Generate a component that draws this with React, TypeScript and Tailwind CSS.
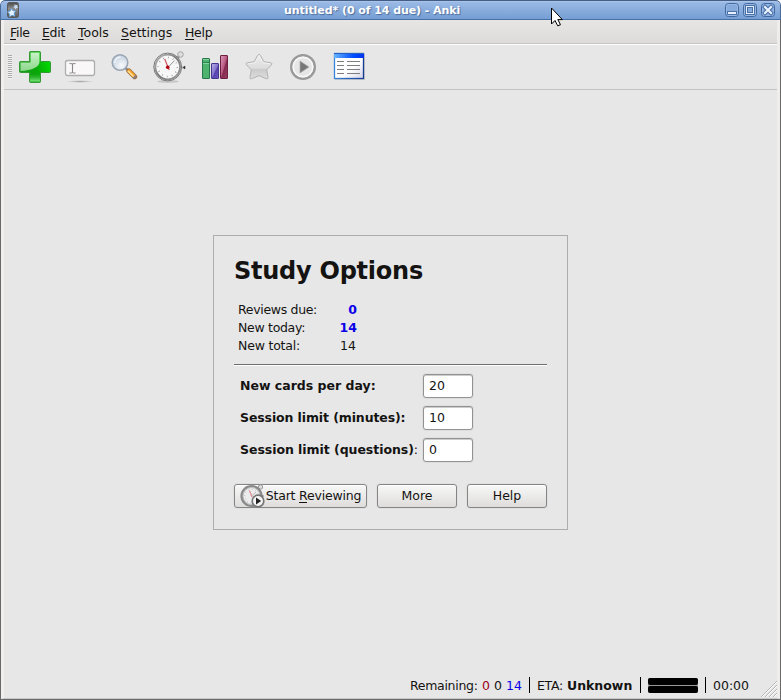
import React from "react";

function AppIcon() {
  return (
    <svg width="14" height="18" viewBox="0 0 14 18" className="block">
      <defs>
        <linearGradient id="app" x1="0" y1="0" x2="0" y2="1">
          <stop offset="0" stopColor="#4a4a4a" />
          <stop offset="0.4" stopColor="#8c8c8c" />
          <stop offset="1" stopColor="#555" />
        </linearGradient>
      </defs>
      <rect x="1.500" y="1.500" width="11" height="15" rx="2" fill="url(#app)" stroke="#5a5a5a" />
      <path d="M8.700 3l1 1.300 1.800-.6-.2 1.800 1 1.200-1.800.3-1 1.400-.8-1.600-1.600-.6 1.300-1z" fill="#c8ddf5" />
      <path d="M5.500 7.500l1.400 2.200 2.700.2-1.500 2.300.8 3-2.900-.9-2.600 1.500.1-3-2-1.900 2.700-.8z" fill="#e2f1ff" stroke="#5aa0e0" strokeWidth=".8" />
    </svg>
  );
}

function WindowButton({ kind }: { kind: "min" | "max" | "close" }) {
  return (
    <svg width="15" height="15" viewBox="0 0 15 15" className="block">
      <rect x=".5" y=".5" width="13" height="13" rx="3" fill="#86aadb" stroke="#41699f" />
      <rect x="1.500" y="1.500" width="11" height="11" rx="2" fill="none" stroke="#9dbbe5" strokeWidth=".8" />
      {kind === "min" && <rect x="2.500" y="8.500" width="9" height="3" fill="#e8f1fd" stroke="#4a71a8" />}
      {kind === "max" && (
        <g>
          <rect x="2.500" y="2.500" width="9" height="9" fill="#e4eefc" stroke="#4a71a8" />
          <rect x="4.500" y="4.500" width="5" height="5" fill="#86aadb" stroke="#4a71a8" />
        </g>
      )}
      {kind === "close" && (
        <g>
          <path d="M4 4l6 6M10 4l-6 6" stroke="#4a71a8" strokeWidth="4.200" strokeLinecap="square" />
          <path d="M4 4l6 6M10 4l-6 6" stroke="#e8f1fd" strokeWidth="2.200" strokeLinecap="square" />
        </g>
      )}
    </svg>
  );
}

function Pointer() {
  return (
    <svg width="16" height="24" viewBox="0 0 16 24" className="absolute left-[550px] top-[7px] z-10">
      <path d="M2.500 2v15l3-3 2.800 5.500 3-1.300-2.700-5.200h4.300z" fill="#333" opacity=".3" />
      <path d="M1.500 1v16l3.500-3.500 2.700 5.300 2.700-1.200-2.600-5h4.500z" fill="#fff" stroke="#000" strokeWidth="1" />
    </svg>
  );
}

function MenuItem({ first, rest, className }: { first: string; rest: string; className: string }) {
  return (
    <button className={"h-4 text-left whitespace-nowrap leading-4 " + className}>
      <span className="underline decoration-1 underline-offset-2">{first}</span>
      {rest}
    </button>
  );
}

function PlusIcon() {
  return (
    <svg width="34" height="34" viewBox="0 0 34 34">
      <defs>
        <linearGradient id="plus" x1="0" y1="0.800" x2="1" y2=".4">
          <stop offset="0" stopColor="#1b981b" />
          <stop offset=".55" stopColor="#08a808" />
          <stop offset="1" stopColor="#00dc00" />
        </linearGradient>
        <linearGradient id="plusBottom" x1="0" y1="0" x2="0" y2="1">
          <stop offset="0" stopColor="#079b07" stopOpacity="0" />
          <stop offset="1" stopColor="#80e580" />
        </linearGradient>
        <linearGradient id="plusGloss" x1="0" y1="0" x2="0" y2="1">
          <stop offset="0" stopColor="#c8f3c8" />
          <stop offset="1" stopColor="#8bd68b" />
        </linearGradient>
      </defs>
      <path d="M12.500 1.500h9q1 0 1 1v9h9q1 0 1 1v9q0 1-1 1h-9v9q0 1-1 1h-9q-1 0-1-1v-9h-9q-1 0-1-1v-9q0-1 1-1h9v-9q0-1 1-1z" fill="url(#plus)" stroke="#349b34" />
      <path d="M12 22h10v9.500H12z" fill="url(#plusBottom)" />
      <path d="M12.500 2.500h9v9q0 4-5 6.500-5 2.500-14 3v-8.500h10z" fill="url(#plusGloss)" />
    </svg>
  );
}

function FieldIcon() {
  return (
    <svg width="32" height="34" viewBox="0 0 32 34">
      <defs>
        <radialGradient id="fieldShade">
          <stop offset="0" stopColor="#777" stopOpacity=".6" />
          <stop offset="1" stopColor="#777" stopOpacity="0" />
        </radialGradient>
      </defs>
      <ellipse cx="16" cy="31.500" rx="14" ry="1.300" fill="url(#fieldShade)" />
      <rect x="1.500" y="10.500" width="29" height="15" rx="2.200" fill="#faf7f8" stroke="#adadad" strokeWidth="1.300" />
      <path d="M5.500 13.500q3 0 3 .8 0-.8 3-.8M8.500 14v9M5.500 23q3 0 3-.8 0 .8 3 .8" fill="none" stroke="#888" strokeWidth="1.100" />
    </svg>
  );
}

function SearchIcon() {
  return (
    <svg width="28" height="28" viewBox="0 0 28 28">
      <defs>
        <radialGradient id="lens" cx=".6" cy=".7" r=".75">
          <stop offset="0" stopColor="#f8fafc" />
          <stop offset=".6" stopColor="#d5dee8" />
          <stop offset="1" stopColor="#b8c8da" />
        </radialGradient>
      </defs>
      <path d="M15.500 15l3 3" stroke="#888" strokeWidth="2.500" />
      <path d="M19 18l5.700 5.700" stroke="#a0703f" strokeWidth="5" strokeLinecap="round" />
      <path d="M19 18l5.200 5.200" stroke="#f6a32c" strokeWidth="3.500" strokeLinecap="round" />
      <path d="M18.300 18.300l5 5" stroke="#ffe6a3" strokeWidth="1.300" strokeLinecap="round" />
      <path d="M23.300 25.500l2.700-2.700" stroke="#8c7b85" strokeWidth="2" />
      <circle cx="10" cy="9.500" r="7.800" fill="url(#lens)" stroke="#9aa5b3" strokeWidth="1.500" />
      <path d="M4.700 10a6 6 0 0 1 6-6" fill="none" stroke="#eef5fb" strokeWidth="1.500" />
    </svg>
  );
}

function Stopwatch() {
  return (
    <svg width="34" height="34" viewBox="0 0 34 34" className="shrink-0">
      <defs>
        <linearGradient id="rim" x1="0" y1="0" x2="1" y2="1">
          <stop offset="0" stopColor="#bbb" />
          <stop offset=".5" stopColor="#777" />
          <stop offset="1" stopColor="#999" />
        </linearGradient>
      </defs>
      <ellipse cx="16" cy="31.500" rx="11" ry="1.500" fill="#aaa" opacity=".5" />
      <circle cx="28.500" cy="4.500" r="2.800" fill="#ddd" stroke="#a5a5a5" />
      <path d="M24.500 9l2.500-2.500" stroke="#999" strokeWidth="2.500" />
      <path d="M29.500 17.500h2" stroke="#aaa" strokeWidth="2" />
      <path d="M31 17.500l2-1.500v3z" fill="#222" stroke="#333" strokeWidth=".5" />
      <circle cx="15.700" cy="17" r="13.900" fill="#ddd" stroke="#777" />
      <circle cx="15.700" cy="17" r="12.300" fill="#f7f7f7" stroke="url(#rim)" strokeWidth="1.800" />
      <circle cx="15.700" cy="17" r="9.500" fill="none" stroke="#999" strokeWidth="1.600" strokeDasharray=".8 4.174" />
      <path d="M15.700 17.500l7-7" stroke="#777" strokeWidth=".8" />
      <path d="M17.200 20l-4.500-11" stroke="#c9545d" strokeWidth="1.200" />
      <circle cx="15.700" cy="17.300" r="1.800" fill="#b3000f" />
    </svg>
  );
}

function ReviewIcon() {
  return (
    <svg width="25" height="24" viewBox="0 0 25 24" className="shrink-0">
      <circle cx="20.500" cy="3" r="2.200" fill="#ddd" stroke="#999" />
      <path d="M17.500 6.500l2-2" stroke="#888" strokeWidth="2" />
      <path d="M21 12h2.500" stroke="#888" strokeWidth="2" />
      <circle cx="11.500" cy="12" r="9.900" fill="#ececec" stroke="#8a8a8a" strokeWidth="2.400" />
      <circle cx="11.500" cy="12" r="8.500" fill="none" stroke="#bbb" />
      <circle cx="11.500" cy="12" r="6.800" fill="none" stroke="#aaa" strokeWidth="1" strokeDasharray=".7 2.860" />
      <path d="M11.500 12l4.500-4" stroke="#aaa" strokeWidth=".8" />
      <path d="M12 13L9.500 6.500" stroke="#df858b" strokeWidth="1.100" />
      <circle cx="18" cy="17" r="5.800" fill="#f5f5f5" stroke="#777" strokeWidth="1.700" />
      <path d="M16 13.500v7l5.200-3.500z" fill="#222" />
    </svg>
  );
}

function StatsIcon() {
  return (
    <svg width="28" height="26" viewBox="0 0 28 26">
      <defs>
        <linearGradient id="statBlue" x1="0" y1="0" x2="1" y2="1">
          <stop offset="0" stopColor="#bcb3e8" />
          <stop offset=".5" stopColor="#8173cd" />
          <stop offset=".55" stopColor="#5744ae" />
          <stop offset="1" stopColor="#6753bd" />
        </linearGradient>
        <linearGradient id="statRed" x1="0" y1="0" x2="1" y2="1">
          <stop offset="0" stopColor="#dda0bd" />
          <stop offset=".5" stopColor="#b85580" />
          <stop offset=".55" stopColor="#852b50" />
          <stop offset="1" stopColor="#9b3c62" />
        </linearGradient>
      </defs>
      <rect x="1.500" y="4.500" width="7" height="20" rx=".5" fill="#4eb36e" stroke="#28774b" />
      <path d="M2 5.500h6M2 9.500h6" stroke="#83d39c" />
      <path d="M2 8.500h6" stroke="#308353" />
      <rect x="10.500" y="9.500" width="7" height="15" rx=".5" fill="url(#statBlue)" stroke="#45368e" />
      <rect x="19.500" y="1.500" width="7" height="23" rx=".5" fill="url(#statRed)" stroke="#6c1f40" />
    </svg>
  );
}

function StarIcon() {
  return (
    <svg width="28" height="28" viewBox="0 0 28 28">
      <defs>
        <linearGradient id="star" x1="0" y1="0" x2="0" y2="1">
          <stop offset="0" stopColor="#ececec" />
          <stop offset=".57" stopColor="#dcdcdc" />
          <stop offset=".6" stopColor="#cacaca" />
          <stop offset="1" stopColor="#dedede" />
        </linearGradient>
      </defs>
      <path d="M14 1.500q1 0 1.500 1l3.300 6.200 7 1.100q2 .5.700 2l-4.800 5 1.300 7.500q.2 2.200-1.700 1.400L14 22.600l-7.300 3.100q-1.900.8-1.700-1.400l1.300-7.500-4.800-5q-1.300-1.500.7-2l7-1.100 3.300-6.200q.5-1 1.500-1z" fill="url(#star)" stroke="#b2b2b2" />
      <path d="M14 3l4 6.800 7.300 1M14 3l-4 6.800-7.300 1" fill="none" stroke="#f2f2f2" strokeWidth=".8" />
    </svg>
  );
}

function PlayIcon() {
  return (
    <svg width="28" height="28" viewBox="0 0 28 28">
      <circle cx="14" cy="14" r="11.800" fill="#e6e6e6" stroke="#999" strokeWidth="2.400" />
      <circle cx="14" cy="14" r="9.800" fill="none" stroke="#f8f8f8" strokeWidth="1.400" />
      <path d="M11 8v12l9-6z" fill="#777" stroke="#aaa" strokeWidth=".7" />
    </svg>
  );
}

function ListIcon() {
  return (
    <svg width="32" height="28" viewBox="0 0 32 28">
      <defs>
        <linearGradient id="listBar"><stop stopColor="#67b4ff" /><stop offset=".65" stopColor="#004cff" /><stop offset="1" stopColor="#0033ed" /></linearGradient>
        <linearGradient id="listPage" x1="0" y1="0" x2="1" y2="1"><stop stopColor="#fff" /><stop offset=".6" stopColor="#fff" /><stop offset="1" stopColor="#d1d1e7" /></linearGradient>
        <linearGradient id="listEdge"><stop stopColor="#3585dc" /><stop offset="1" stopColor="#173c92" /></linearGradient>
      </defs>
      <rect x="2" y="2" width="30" height="26" fill="#999" opacity=".35" />
      <rect x="1.500" y="1.500" width="29" height="25" fill="url(#listPage)" stroke="url(#listEdge)" strokeWidth="1.300" />
      <rect x="1" y="1" width="30" height="5" fill="url(#listBar)" />
      <path d="M1 1.500h30" stroke="#2360c4" />
      <path d="M4 9.500h7M14 9.500h13M4 13.500h7M14 13.500h13M4 17.500h7M14 17.500h13M4 21.500h7M14 21.500h13" stroke="#7d7d7d" />
    </svg>
  );
}

function NumberField({ value }: { value: string }) {
  return (
    <input
      defaultValue={value}
      className="block h-6 w-[50px] rounded-[3px] border border-[#929292] bg-white px-[5px] pb-[2px] text-[12.500px] leading-4 font-normal shadow-[0_0_0_1px_#dedede,inset_0_1px_0_#ccc] outline-none"
    />
  );
}

const buttonClass =
  "flex h-6 items-center justify-center rounded-[3px] border border-[#858585] bg-linear-to-b from-[#f8f8f8] to-[#dedddb] shadow-[inset_0_1px_0_#fff,0_0_0_1px_#e0e0e0] whitespace-nowrap";

export default function App() {
  return (
    <div className="relative flex h-[700px] w-[781px] flex-col overflow-hidden rounded-t-[5px] bg-[#e7e7e7] font-['DejaVu_Sans',sans-serif] text-[13px] leading-4 text-[#141312]">
      <header className="flex h-5 shrink-0 items-center rounded-t-[5px] border border-t-[#435d85] border-r-[#4b6c99] border-b-[#4670a8] border-l-[#4b6c99] bg-linear-to-b from-[#9dbbe6] to-[#759ed3] pl-[5px] pr-[4px] shadow-[inset_0_1px_0_#a9c4ea]">
        <AppIcon />
        <h1 className="mt-px ml-[264px] w-[180px] whitespace-nowrap text-[11px] font-bold tracking-[-0.07px] text-white [text-shadow:1px_1px_1px_#4a6c9d]">untitled* (0 of 14 due) - Anki</h1>
        <div className="mt-px ml-auto flex gap-[3px]">
          <WindowButton kind="min" />
          <WindowButton kind="max" />
          <WindowButton kind="close" />
        </div>
      </header>
      <div className="flex min-h-0 flex-1 flex-col border-x border-b border-[#696969]">
        <div className="flex min-h-0 flex-1 flex-col border-x-[3px] border-b border-l-[#f0efed] border-r-[#eeedec] border-b-[#c8c8c8]">
          <nav className="flex h-6 shrink-0 items-start border-b border-[#c4c4c2] bg-linear-to-b from-[#e7e6e4] to-[#dcdbd9] pt-[5px] pl-[6px] text-[12.500px]">
            <MenuItem first="F" rest="ile" className="w-8 tracking-[-0.3px]" />
            <MenuItem first="E" rest="dit" className="w-9 tracking-[-0.3px]" />
            <MenuItem first="T" rest="ools" className="w-[43px]" />
            <MenuItem first="S" rest="ettings" className="w-16" />
            <MenuItem first="H" rest="elp" className="w-9 tracking-[-0.3px]" />
          </nav>
          <div className="flex h-[46px] shrink-0 items-center border-t border-b border-t-white border-b-[#c3c3c3] pl-1">
            <div className="h-6 w-1 bg-[repeating-linear-gradient(#aaa_0_1px,#f4f4f4_1px_2px)]" />
            <div className="ml-[6px]"><PlusIcon /></div>
            <div className="ml-[12px]"><FieldIcon /></div>
            <div className="ml-[14px]"><SearchIcon /></div>
            <div className="ml-[14px]"><Stopwatch /></div>
            <div className="ml-[15px]"><StatsIcon /></div>
            <div className="ml-[16px]"><StarIcon /></div>
            <div className="ml-[16px]"><PlayIcon /></div>
            <div className="mb-[2px] ml-[16px]"><ListIcon /></div>
          </div>
          <main className="flex-1 pt-[145px] pl-[209px]">
            <section className="h-[295px] w-[355px] border border-[#adadad] px-5 pt-5">
              <h2 className="h-[30px] text-2xl leading-[30px] font-bold tracking-[-0.25px]">Study Options</h2>
              <div className="mt-[15px] w-[123px] pl-1 text-[12.500px] leading-[18px]">
                <div className="flex justify-between"><span className="tracking-[-0.32px]">Reviews due:</span><b className="text-[#0b00e8]">0</b></div>
                <div className="flex justify-between"><span className="tracking-[-0.3px]">New today:</span><b className="text-[#0b00e8]">14</b></div>
                <div className="flex justify-between"><span className="tracking-[-0.2px]">New total:</span><span className="pr-px">14</span></div>
              </div>
              <hr className="mt-[9px] h-[2px] w-[313px] border-t border-b border-t-[#6e6e6e] border-b-white" />
              <form className="mt-[8px] flex flex-col gap-2 pl-[6px] text-[12.500px] font-bold">
                <label className="flex h-6 items-center"><span className="w-[183px]">New cards per day:</span><NumberField value="20" /></label>
                <label className="flex h-6 items-center"><span className="w-[183px] tracking-[-0.11px]">Session limit (minutes):</span><NumberField value="10" /></label>
                <label className="flex h-6 items-center"><span className="w-[183px] tracking-[-0.05px] whitespace-nowrap">Session limit (questions)<span className="font-normal">:</span></span><NumberField value="0" /></label>
              </form>
              <div className="mt-[22px] flex gap-[10px] text-[12.500px]">
                <button className={buttonClass + " w-[133px]"}>
                  <ReviewIcon />
                  <span className="ml-[1px] tracking-[-0.2px]">Start <span className="underline decoration-1 underline-offset-2">R</span>eviewing</span>
                </button>
                <button className={buttonClass + " w-20"}>More</button>
                <button className={buttonClass + " w-20"}>Help</button>
              </div>
            </section>
          </main>
          <footer className="relative flex h-[26px] shrink-0 items-center pl-[406px] text-[12.500px] whitespace-nowrap">
            <span className="w-[72px] pt-[2px] tracking-[-0.3px]">Remaining:</span>
            <span className="w-[12px] pt-[2px] text-[#a00020]">0</span>
            <span className="w-[12px] pt-[2px]">0</span>
            <span className="w-[23px] pt-[2px] text-[#0b00e8]">14</span>
            <i className="h-4 w-px bg-black" />
            <span className="ml-[7px] w-[30px] pt-[2px] tracking-[-0.3px]">ETA:</span>
            <b className="w-[73px] pt-[2px]">Unknown</b>
            <i className="h-4 w-px bg-black" />
            <div className="ml-[7px] flex w-[50px] flex-col gap-px rounded-[2px] bg-[#999]">
              <i className="h-[7px] rounded-[2px] bg-black" />
              <i className="h-[7px] rounded-[2px] bg-black" />
            </div>
            <i className="ml-[7px] h-4 w-px bg-black" />
            <span className="ml-[7px] pt-[2px]">00:00</span>
            <svg width="17" height="17" className="absolute right-0 bottom-[1px]">
              <path d="M1 17L17 1M5 17L17 5M9 17l8-8M13 17l4-4" stroke="#b5b5b5" />
              <path d="M2 17L17 2M6 17L17 6M10 17l7-7M14 17l3-3" stroke="#fff" />
            </svg>
          </footer>
        </div>
      </div>
      <Pointer />
    </div>
  );
}
